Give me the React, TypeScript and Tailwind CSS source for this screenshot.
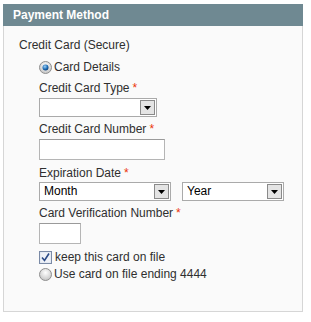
import React from "react";

function Req() {
  return <span className="ml-[3px] text-[#eb340a]">*</span>;
}

function SelectBox({ width, value }: { width: string; value?: string }) {
  return (
    <div
      className={`${width} flex h-[19px] items-stretch border border-[#aaaaaa] bg-white`}
    >
      <span className="flex-1 pl-[4px] text-[12px] leading-[17px] text-black">
        {value}
      </span>
      <span className="m-[1px] flex w-[15px] items-center justify-center border border-[#8a8a8a] bg-[#e4e4e4]">
        <svg width="7" height="4" viewBox="0 0 7 4">
          <path d="M0 0h7L3.5 4z" fill="#000" />
        </svg>
      </span>
    </div>
  );
}

function Radio({ checked }: { checked?: boolean }) {
  return (
    <svg width="13" height="13" viewBox="0 0 13 13" className="shrink-0">
      <defs>
        <radialGradient id={checked ? "rg1" : "rg0"} cx="50%" cy="35%" r="60%">
          <stop offset="0%" stopColor="#ffffff" />
          <stop offset="100%" stopColor="#c8c8c8" />
        </radialGradient>
        <radialGradient id="dot" cx="40%" cy="35%" r="70%">
          <stop offset="0%" stopColor="#9fd0f5" />
          <stop offset="60%" stopColor="#1f6fb8" />
          <stop offset="100%" stopColor="#0b3a70" />
        </radialGradient>
      </defs>
      <circle
        cx="6.5"
        cy="6.5"
        r="6"
        fill={`url(#${checked ? "rg1" : "rg0"})`}
        stroke="#8f8f8f"
      />
      {checked && <circle cx="6.5" cy="6.5" r="3" fill="url(#dot)" />}
    </svg>
  );
}

function Checkbox() {
  return (
    <svg width="13" height="13" viewBox="0 0 13 13" className="shrink-0">
      <rect x="0.5" y="0.5" width="12" height="12" fill="#dde3ee" stroke="#7a8aa6" />
      <rect x="1.5" y="1.5" width="10" height="10" fill="#eef1f7" />
      <path d="M3 6.5 L5.5 9.5 L10 2.5" fill="none" stroke="#2b4a86" strokeWidth="1.6" />
    </svg>
  );
}

export default function App() {
  return (
    <div className="w-[311px] h-[322px] bg-white pt-[4px] pl-[3px] font-['Liberation_Sans',Arial,sans-serif] text-[12px] leading-[16px] text-[#2f2f2f]">
      <div className="w-[300px]">
        <div className="h-[22px] bg-[#6f8992] pl-[10px] text-[12px] font-bold leading-[22px] text-white">
          Payment Method
        </div>
        <div className="h-[286px] border border-t-0 border-[#d6d6d6] bg-[#fafafa] pt-[11px] pl-[15px]">
          <div>Credit Card (Secure)</div>
          <div className="ml-[20px]">
            <div className="mt-[6px] flex items-center gap-[2px]">
              <Radio checked />
              <span>Card Details</span>
            </div>

            <div className="mt-[5px]">
              Credit Card Type
              <Req />
            </div>
            <div className="mt-[2px]">
              <SelectBox width="w-[118px]" />
            </div>

            <div className="mt-[4px]">
              Credit Card Number
              <Req />
            </div>
            <div className="mt-[2px] h-[21px] w-[126px] border border-[#b5b5b5] border-t-[#9a9a9a] bg-white" />

            <div className="mt-[5px]">
              Expiration Date
              <Req />
            </div>
            <div className="mt-[1px] flex gap-[11px]">
              <SelectBox width="w-[132px]" value="Month" />
              <SelectBox width="w-[102px]" value="Year" />
            </div>

            <div className="mt-[4px]">
              Card Verification Number
              <Req />
            </div>
            <div className="mt-[2px] h-[21px] w-[42px] border border-[#b5b5b5] border-t-[#9a9a9a] bg-white" />

            <div className="mt-[5px] flex items-center gap-[3px]">
              <Checkbox />
              <span>keep this card on file</span>
            </div>
            <div className="mt-[1px] flex items-center gap-[2px]">
              <Radio />
              <span>Use card on file ending 4444</span>
            </div>
          </div>
        </div>
      </div>
    </div>
  );
}
